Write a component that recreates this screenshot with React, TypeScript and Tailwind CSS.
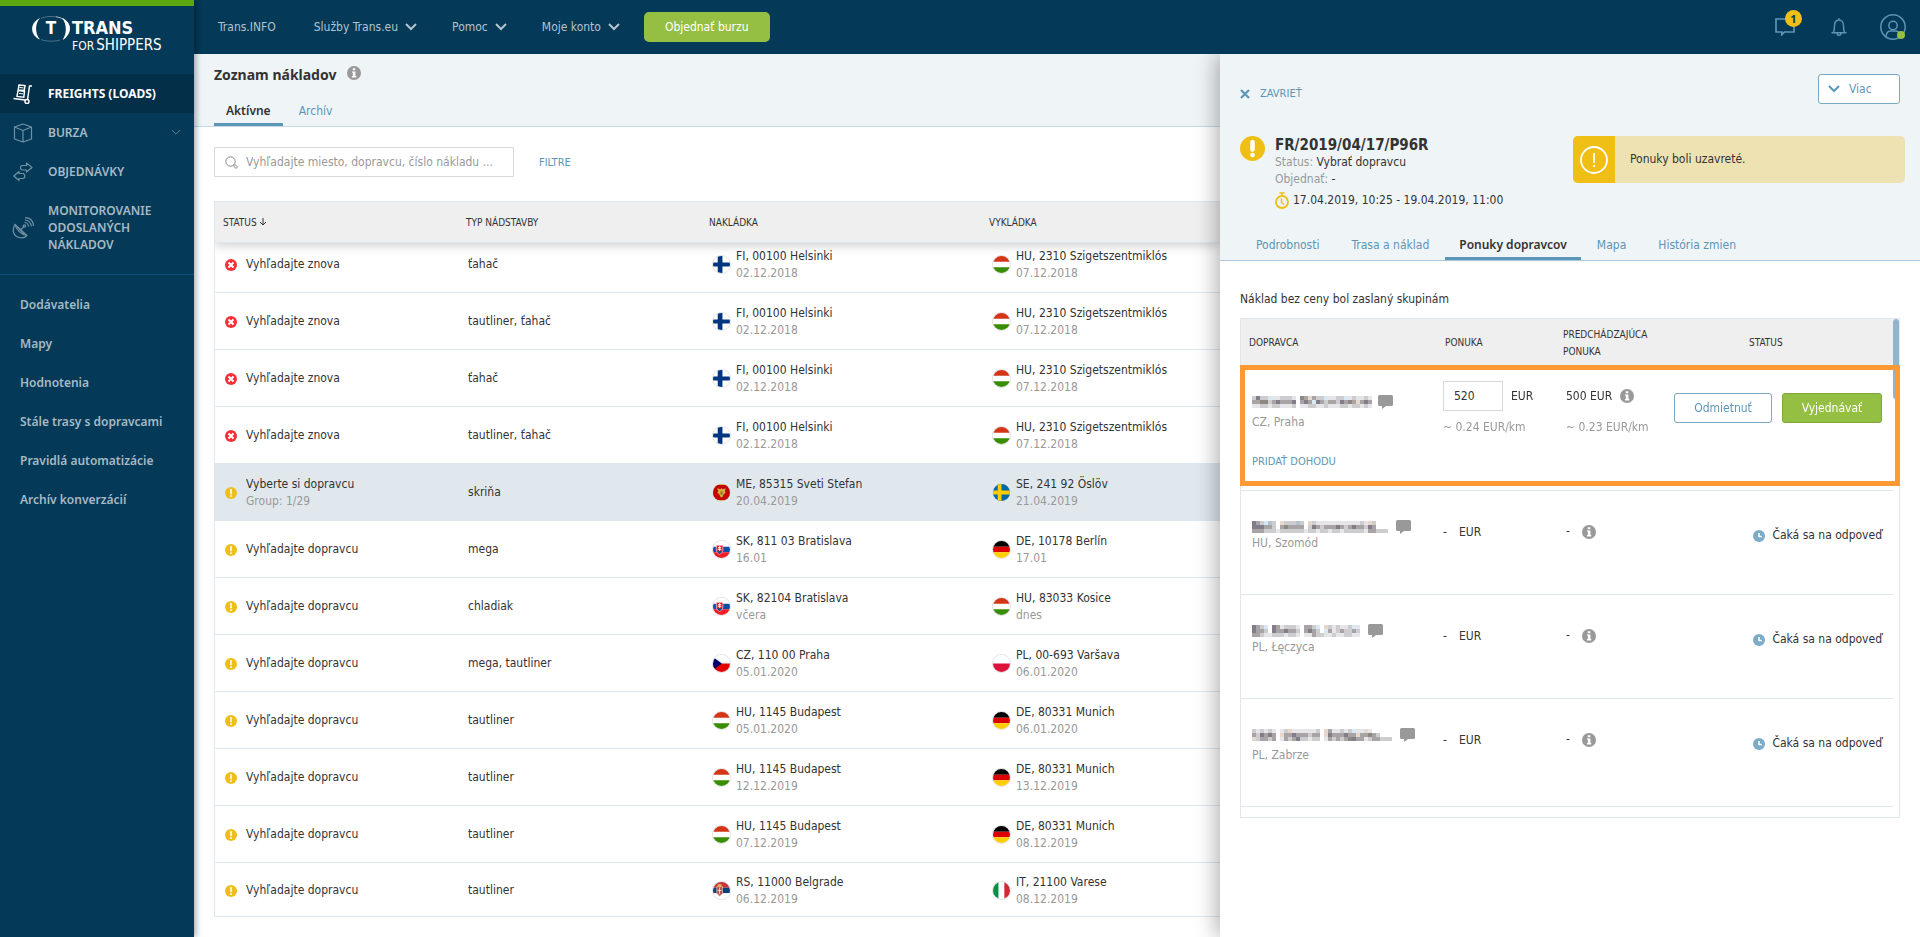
import React, { useState } from 'react';

type Country = 'FI' | 'HU' | 'ME' | 'SE' | 'SK' | 'DE' | 'CZ' | 'PL' | 'RS' | 'IT';

interface Place {
  country: Country;
  label: string;
  date: string;
}

interface Freight {
  failed?: boolean;
  selected?: boolean;
  status: string;
  group?: string;
  body: string;
  from: Place;
  to: Place;
}

const helsinki: Place = { country: 'FI', label: 'FI, 00100 Helsinki', date: '02.12.2018' };
const sziget: Place = { country: 'HU', label: 'HU, 2310 Szigetszentmiklós', date: '07.12.2018' };

const freights: Freight[] = [
  { failed: true, status: 'Vyhľadajte znova', body: 'ťahač', from: helsinki, to: sziget },
  { failed: true, status: 'Vyhľadajte znova', body: 'tautliner, ťahač', from: helsinki, to: sziget },
  { failed: true, status: 'Vyhľadajte znova', body: 'ťahač', from: helsinki, to: sziget },
  { failed: true, status: 'Vyhľadajte znova', body: 'tautliner, ťahač', from: helsinki, to: sziget },
  {
    selected: true,
    status: 'Vyberte si dopravcu',
    group: 'Group: 1/29',
    body: 'skriňa',
    from: { country: 'ME', label: 'ME, 85315 Sveti Stefan', date: '20.04.2019' },
    to: { country: 'SE', label: 'SE, 241 92 Öslöv', date: '21.04.2019' },
  },
  {
    status: 'Vyhľadajte dopravcu',
    body: 'mega',
    from: { country: 'SK', label: 'SK, 811 03 Bratislava', date: '16.01' },
    to: { country: 'DE', label: 'DE, 10178 Berlín', date: '17.01' },
  },
  {
    status: 'Vyhľadajte dopravcu',
    body: 'chladiak',
    from: { country: 'SK', label: 'SK, 82104 Bratislava', date: 'včera' },
    to: { country: 'HU', label: 'HU, 83033 Kosice', date: 'dnes' },
  },
  {
    status: 'Vyhľadajte dopravcu',
    body: 'mega, tautliner',
    from: { country: 'CZ', label: 'CZ, 110 00 Praha', date: '05.01.2020' },
    to: { country: 'PL', label: 'PL, 00-693 Varšava', date: '06.01.2020' },
  },
  {
    status: 'Vyhľadajte dopravcu',
    body: 'tautliner',
    from: { country: 'HU', label: 'HU, 1145 Budapest', date: '05.01.2020' },
    to: { country: 'DE', label: 'DE, 80331 Munich', date: '06.01.2020' },
  },
  {
    status: 'Vyhľadajte dopravcu',
    body: 'tautliner',
    from: { country: 'HU', label: 'HU, 1145 Budapest', date: '12.12.2019' },
    to: { country: 'DE', label: 'DE, 80331 Munich', date: '13.12.2019' },
  },
  {
    status: 'Vyhľadajte dopravcu',
    body: 'tautliner',
    from: { country: 'HU', label: 'HU, 1145 Budapest', date: '07.12.2019' },
    to: { country: 'DE', label: 'DE, 80331 Munich', date: '08.12.2019' },
  },
  {
    status: 'Vyhľadajte dopravcu',
    body: 'tautliner',
    from: { country: 'RS', label: 'RS, 11000 Belgrade', date: '06.12.2019' },
    to: { country: 'IT', label: 'IT, 21100 Varese', date: '08.12.2019' },
  },
];

// Anonymised carrier names: one letter per 4px block, see blockColors
const maskedNames = {
  praha: ['bdbbeaabbba.gcfcbbeaabbeabaaba', 'ccggbcdcccd.cdcedcbccbdcgcfcdc', 'aabbabbaaab.aabbaabaaabbabbaba'],
  szomod: ['dcbehb.fbbbhb.fbaaaaaaaaaaabafb...', 'dddccb.cgcccc.bdcbcccdcbcdccbdc...', 'cccbbbabbbbbbabbabbabbabbbbbaccbbb'],
  leczyca: ['dcbe.dcabbba.ccbe.fbabaabea', 'dccb.dccdccb.cdcb.ecabcbbcb', 'ccbaabbbabba.aacbbaabaabbaa'],
  zabrze: ['bababa.abfaaaaaab.fcaababeaafa.....', 'cbdcdc.fccdcccbcc.fdcccdccfccgcb...', 'fbccbc.acbcdbbabb.acbcbcgdccabccbbb'],
};

const blockColors: Record<string, string> = {
  a: '#e6e6e8',
  b: '#cdcccf',
  c: '#a8a3a4',
  d: '#827d88',
  e: '#d8e8f4',
  f: '#e8d8cb',
  g: '#8d8980',
  h: '#b3c3cd',
};

interface Offer {
  name: keyof typeof maskedNames;
  city: string;
  loose?: boolean;
}

const waitingOffers: Offer[] = [
  { name: 'szomod', city: 'HU, Szomód' },
  { name: 'leczyca', city: 'PL, Łęczyca' },
  { name: 'zabrze', city: 'PL, Zabrze', loose: true },
];

const sideLinks = [
  'Dodávatelia',
  'Mapy',
  'Hodnotenia',
  'Stále trasy s dopravcami',
  'Pravidlá automatizácie',
  'Archív konverzácií',
];

const detailTabs = ['Podrobnosti', 'Trasa a náklad', 'Ponuky dopravcov', 'Mapa', 'História zmien'];

function Flag({ country }: { country: Country }) {
  const art: Record<Country, React.ReactNode> = {
    FI: (
      <>
        <path fill="#fff" d="M0 0h18v18H0z" />
        <path fill="#003580" d="M5 0h5v18H5zM0 7h18v4H0z" />
      </>
    ),
    SE: (
      <>
        <path fill="#006aa7" d="M0 0h18v18H0z" />
        <path fill="#fecc00" d="M5 0h4v18H5zM0 7h18v4H0z" />
      </>
    ),
    HU: (
      <>
        <path fill="#fff" d="M0 0h18v18H0z" />
        <path fill="#d43516" d="M0 0h18v6H0z" />
        <path fill="#388d00" d="M0 12h18v6H0z" />
      </>
    ),
    DE: (
      <>
        <path fill="#000" d="M0 0h18v6H0z" />
        <path fill="#d00" d="M0 6h18v6H0z" />
        <path fill="#ffce00" d="M0 12h18v6H0z" />
      </>
    ),
    CZ: (
      <>
        <path fill="#fff" d="M0 0h18v9H0z" />
        <path fill="#e30000" d="M0 9h18v9H0z" />
        <path fill="#00006f" d="M0 2l9.500 7L0 16z" />
      </>
    ),
    PL: (
      <>
        <path fill="#fff" d="M0 0h18v9H0z" />
        <path fill="#dc143c" d="M0 9h18v9H0z" />
      </>
    ),
    IT: (
      <>
        <path fill="#009246" d="M0 0h6v18H0z" />
        <path fill="#fff" d="M6 0h6v18H6z" />
        <path fill="#ce2b37" d="M12 0h6v18h-6z" />
      </>
    ),
    SK: (
      <>
        <path fill="#fff" d="M0 0h18v6H0z" />
        <path fill="#0b4ea2" d="M0 6h18v6H0z" />
        <path fill="#ee1c25" d="M0 12h18v6H0z" />
        <path fill="#ee1c25" stroke="#fff" strokeWidth=".6" d="M3.500 4.500h7v5c0 2.500-2 4-3.500 4.700-1.500-.7-3.500-2.200-3.500-4.700z" />
        <path fill="#0b4ea2" d="M4.500 11.300q2.500-1.500 5 0-.8 1.500-2.500 2.200-1.700-.7-2.500-2.200z" />
        <path fill="none" stroke="#fff" d="M7 5.500v5M5.500 7h3M5 8.800h4" />
      </>
    ),
    ME: (
      <>
        <path fill="#d3ae3b" d="M0 0h18v18H0z" />
        <path fill="#c40308" d="M0 1h18v16H0z" />
        <path fill="#d3ae3b" d="M9 4l1 1.500 3.500-1-1 3.500 1 1-2.500 2.500L10 14H8l-1-2.500L4.500 9l1-1-1-3.500 3.500 1z" />
        <path fill="#8f6b24" d="M8 8h2v3H8z" />
      </>
    ),
    RS: (
      <>
        <path fill="#c6363c" d="M0 0h18v6H0z" />
        <path fill="#0c4076" d="M0 6h18v6H0z" />
        <path fill="#fff" d="M0 12h18v6H0z" />
        <path fill="#b54a44" stroke="#dcc8b4" strokeWidth=".8" d="M4 5h6v7l-3 3-3-3z" />
        <path fill="#e3b85c" d="M5 2.500h4V5H5z" />
        <path stroke="#fff" strokeWidth=".8" d="M7 6v7M5 9h4" />
      </>
    ),
  };
  return (
    <span className="block size-[19px] shrink-0 overflow-hidden rounded-full border border-[#e0e0e0]">
      <svg viewBox="0 0 18 18" className="block size-full">
        {art[country]}
      </svg>
    </span>
  );
}

function Info({ className }: { className: string }) {
  return (
    <svg viewBox="0 0 14 14" className={className} aria-label="Info">
      <circle cx="7" cy="7" r="7" fill="#999" />
      <path fill="#fff" d="M5.800 2.300h2.500v2H5.800zM5 5.400h3.400v4.600H9.300v1.400H4.900V10h1V6.800H5z" />
    </svg>
  );
}

function Chevron({ className }: { className: string }) {
  return (
    <svg viewBox="0 0 12 8" className={className} fill="none" stroke="currentColor">
      <path d="M1 1l5 5 5-5" />
    </svg>
  );
}

function StatusIcon({ failed }: { failed?: boolean }) {
  return failed ? (
    <svg viewBox="0 0 12 12" className="size-3 shrink-0">
      <circle cx="6" cy="6" r="6" fill="#f92f36" />
      <path d="M3.500 3.500l5 5M8.500 3.500l-5 5" stroke="#fff" strokeWidth="2" />
    </svg>
  ) : (
    <svg viewBox="0 0 12 12" className="size-3 shrink-0">
      <circle cx="6" cy="6" r="6" fill="#efbf16" />
      <path d="M6 2v5.200M6 8.200V10" stroke="#fff" strokeWidth="1.600" />
    </svg>
  );
}

function MaskedName({ name }: { name: keyof typeof maskedNames }) {
  const rows = maskedNames[name];
  const width = Math.max(...rows.map((row) => row.length)) * 4;
  return (
    <svg width={width} height="12" shapeRendering="crispEdges" className="block shrink-0" aria-hidden="true">
      {rows.map((row, y) =>
        row.split('').map((block, x) =>
          block === '.' ? null : (
            <rect key={`${x}-${y}`} x={x * 4} y={y * 4} width="4" height="4" fill={blockColors[block]} />
          )
        )
      )}
    </svg>
  );
}

function ChatButton() {
  return (
    <button aria-label="Chat" className="shrink-0">
      <svg viewBox="0 0 15 14" className="block h-[14px] w-[15px]" fill="#999">
        <path d="M1.500 0h12Q15 0 15 1.500v8q0 1.500-1.500 1.500H8l-4 3v-3H1.500Q0 11 0 9.500v-8Q0 0 1.500 0z" />
      </svg>
    </button>
  );
}

function Logo() {
  return (
    <a
      href="#"
      className="flex items-start gap-[2px] pt-[10px] pl-8 font-['DejaVu_Sans_Condensed',sans-serif] text-white"
      aria-label="Trans for Shippers"
    >
      <svg viewBox="0 0 38 26" className="h-[26px] w-[38px]">
        <path fill="#fff" d="M8 2C-2.500 7-2.500 19 8 23.500 2.800 18 2.800 7.500 8 2z" />
        <path fill="#fff" d="M30 2c10 4 11 16 .5 22 4.500-6 4.500-16-.5-22z" />
        <path fill="none" stroke="#fff" strokeWidth=".7" d="M24 .8c8 1 13 6 13.500 11" />
        <path fill="none" stroke="#7f9bab" strokeWidth=".6" d="M9 2.500C13 .3 20 .1 24 .8M9 23.500c4 2 14 2.300 19 .5" />
        <text x="19" y="18" textAnchor="middle" fill="#fff" fontSize="17" fontWeight="700">
          T
        </text>
      </svg>
      <span className="flex flex-col pt-[2px]">
        <b className="text-[18px] leading-[20px]">TRANS</b>
        <span className="flex items-baseline gap-[2px] text-[15px] leading-[14px] font-normal">
          <span className="text-[12px]">FOR</span>
          <span>SHIPPERS</span>
        </span>
      </span>
    </a>
  );
}

function Sidebar() {
  return (
    <aside className="z-20 w-[194px] shrink-0 border-t-[6px] border-[#5ba80f] bg-[#043957] font-['Noto_Sans',sans-serif] text-[12px] leading-[17px] font-semibold text-[#a6b9c5] shadow-[2px_0_6px_rgba(0,0,0,0.35)]">
      <div className="h-[68px]">
        <Logo />
      </div>
      <nav>
        <a href="#" className="flex h-[39px] items-center gap-[15px] bg-[#032f49] pl-[13px] font-bold text-white">
          <svg viewBox="0 0 20 20" className="size-5" fill="none" stroke="currentColor" strokeWidth="1.500">
            <path d="M6 1l6 .6-.8 5-6-.6zM5 6.500l6.500.7-.7 6-6.800-.8z" />
            <path d="M19 2h-2.500L14.500 16M.5 14.500l11.500 1.500" />
            <path d="M6.500 3.500l4 .4M6 9.500l4 .4" strokeWidth="1" />
            <circle cx="14" cy="17.500" r="2" />
          </svg>
          FREIGHTS (LOADS)
        </a>
        <a href="#" className="flex h-[39px] items-center gap-[15px] pr-[13px] pl-[13px]">
          <svg viewBox="0 0 20 20" className="size-5 text-[#7290a3]" fill="none" stroke="currentColor" strokeWidth="1.200" strokeLinejoin="round">
            <path d="M10 1l8.500 3v12L10 19l-8.500-3V4zM1.500 4L10 7.500 18.500 4M10 7.500V19" />
          </svg>
          BURZA
          <Chevron className="ml-auto h-[7px] w-[10px] text-[#7290a3]" />
        </a>
        <a href="#" className="flex h-[39px] items-center gap-[15px] pl-[13px]">
          <svg viewBox="0 0 20 20" className="size-5 text-[#7290a3]" fill="none" stroke="currentColor" strokeWidth="1.200" strokeLinejoin="round">
            <path d="M8.500 3.500h5V1l5.500 4.500-5.500 4.500V8H9.500q-2 0-2-2.200 0-1.500 1-2.300z" />
            <path d="M10.500 11.500H6V9.500L.8 14 6 18.500v-2h4q1.800 0 1.800-2.400 0-1.600-1.300-2.600z" />
          </svg>
          OBJEDNÁVKY
        </a>
        <a href="#" className="flex items-center gap-[14px] py-[11px] pr-6 pl-3">
          <svg viewBox="0 0 22 22" className="size-[22px] shrink-0 text-[#7290a3]" fill="none" stroke="currentColor" strokeWidth="1.200">
            <path d="M3 7.500C-.5 13 1.500 19 7 20.500c3 .8 6 .2 8-2zM5 10l7.500 7" />
            <path d="M3 7.500c1 5 6 10 12 11M8 13.500l4-4" />
            <circle cx="12.500" cy="9" r="1.200" />
            <path d="M12.500 5.500q3.500 0 4 4M12.800 3q5.800.3 6.500 6.500M13 .7q8 .3 8.500 8.300" />
          </svg>
          <span>MONITOROVANIE ODOSLANÝCH NÁKLADOV</span>
        </a>
      </nav>
      <nav className="mt-[10px] border-t border-[#0d4c74] pt-[10px]">
        {sideLinks.map((link) => (
          <a key={link} href="#" className="flex h-[39px] items-center pl-5">
            {link}
          </a>
        ))}
      </nav>
    </aside>
  );
}

function TopBar() {
  return (
    <header className="flex h-[54px] items-center bg-[#043957] pr-[14px] pl-6 text-[12px] text-[#b3c4cf]">
      <a href="#">Trans.INFO</a>
      <button className="ml-[38px] flex items-center gap-[7px]">
        Služby Trans.eu
        <Chevron className="h-2 w-3 stroke-2" />
      </button>
      <button className="ml-[35px] flex items-center gap-[7px]">
        Pomoc
        <Chevron className="h-2 w-3 stroke-2" />
      </button>
      <button className="ml-[35px] flex items-center gap-[7px]">
        Moje konto
        <Chevron className="h-2 w-3 stroke-2" />
      </button>
      <button className="ml-6 h-[30px] rounded-[5px] bg-[#95bf42] px-[21px] text-white">Objednať burzu</button>
      <div className="ml-auto flex items-center text-[#5f94b5]">
        <button aria-label="Správy" className="relative mr-7 w-7">
          <svg viewBox="0 0 20 18" className="block h-[18px] w-5" fill="none" stroke="currentColor" strokeWidth="1.700">
            <path d="M1 1h18v13H9.500L6.800 16.700V14H1z" />
          </svg>
          <span className="absolute -top-[8px] left-[10px] size-[17px] rounded-full bg-[#efbf16] text-center font-['Noto_Sans',sans-serif] text-[11px] leading-[17px] font-bold text-[#043957]">
            1
          </span>
        </button>
        <button aria-label="Upozornenia" className="mr-[33px]">
          <svg viewBox="0 0 16 18" className="block h-[18px] w-4" fill="none" stroke="currentColor" strokeWidth="1.400">
            <path d="M.5 14.700h15M2.500 14.500Q3.500 12 3.500 8C3.500 4 5.500 2 8 2s4.500 2 4.500 6q0 4 1 6.500M8 .3V2M6 15q0 2.200 2 2.200T10 15" />
          </svg>
        </button>
        <button aria-label="Profil" className="relative">
          <svg viewBox="0 0 26 26" className="block size-[26px]" fill="none" stroke="currentColor" strokeWidth="1.500">
            <circle cx="13" cy="13" r="12.200" />
            <circle cx="13" cy="11.500" r="4.200" />
            <path d="M6 22.500q.5-5.500 4.500-5.500h5q3 0 4 2.500" />
          </svg>
          <span className="absolute right-[1px] bottom-[1px] size-2 rounded-full bg-[#95bf42]" />
        </button>
      </div>
    </header>
  );
}

function PlaceCell({ place }: { place: Place }) {
  return (
    <div className="flex items-center gap-[5px]">
      <Flag country={place.country} />
      <div>
        <div>{place.label}</div>
        <div className="text-[#999]">{place.date}</div>
      </div>
    </div>
  );
}

function FreightList() {
  const [query, setQuery] = useState('');

  return (
    <main className="min-w-0 flex-1 overflow-hidden pb-5">
      <div className="border-b border-[#c5dae5] bg-[#eff4f7] pl-5">
        <h1 className="flex items-center gap-[11px] pt-[10px] font-['Noto_Sans',sans-serif] text-[14px] leading-[22px] font-bold">
          Zoznam nákladov
          <Info className="mb-1 size-[14px]" />
        </h1>
        <div className="mt-[10px] flex">
          <button className="h-[30px] border-b-[3px] border-[#5c96b6] px-3 pt-[2px] font-['Noto_Sans',sans-serif] font-semibold">
            Aktívne
          </button>
          <button className="h-[30px] border-b-[3px] border-transparent px-4 pt-[3px] text-[#5c96b6]">Archív</button>
        </div>
      </div>
      <div className="mt-5 flex items-center gap-[25px] pl-5">
        <label className="flex h-[30px] w-[300px] items-center gap-2 border border-[#d9d9d9] pl-[10px]">
          <svg viewBox="0 0 13 13" className="size-[13px] shrink-0" fill="none" stroke="#888">
            <circle cx="5.500" cy="5.500" r="4.700" />
            <path d="M8.500 10l1.500-1.500 2.500 2.500-1.500 1.500z" />
          </svg>
          <input
            value={query}
            onChange={(e) => setQuery(e.target.value)}
            aria-label="Vyhľadávanie"
            placeholder="Vyhľadajte miesto, dopravcu, číslo nákladu ..."
            className="w-full outline-none placeholder:text-[#999]"
          />
        </label>
        <button className="text-[11px] text-[#5c96b6]">FILTRE</button>
      </div>
      <div className="mt-6 ml-5 overflow-hidden border-y border-l border-[#e0e7ee]">
        <table className="w-full table-fixed border-separate border-spacing-0 text-left">
          <thead className="relative z-10 text-[10px] shadow-[0_3px_10px_rgba(0,0,0,0.18)]">
            <tr className="h-[41px] bg-[#efefef]">
              <th className="w-[243px] border-b border-[#dde6ee] pl-2 font-normal">
                <span className="flex items-center gap-[2px]">
                  STATUS
                  <svg viewBox="0 0 8 8" className="size-2" fill="none" stroke="currentColor">
                    <path d="M4 0v7M1 4l3 3 3-3" />
                  </svg>
                </span>
              </th>
              <th className="w-[243px] border-b border-[#dde6ee] pl-2 font-normal">TYP NÁDSTAVBY</th>
              <th className="w-[280px] border-b border-[#dde6ee] pl-2 font-normal">NAKLÁDKA</th>
              <th className="border-b border-[#dde6ee] pl-2 font-normal">VYKLÁDKA</th>
            </tr>
          </thead>
          <tbody>
            {freights.map((freight, i) => (
              <tr
                key={i}
                className={
                  (freight.selected ? 'bg-[#e0e8ee] ' : '') +
                  (i === 0
                    ? 'h-[50px] [&>td]:border-b [&>td]:pb-[6px]'
                    : i === freights.length - 1
                      ? 'h-[53px] [&>td]:pt-[2px]'
                      : 'h-[57px] [&>td]:border-b [&>td]:pt-px')
                }
              >
                <td className="border-[#e0e7ee] pl-[10px]">
                  <div className="flex items-center gap-[9px]">
                    <StatusIcon failed={freight.failed} />
                    <div>
                      <div>{freight.status}</div>
                      {freight.group && <div className="text-[#999]">{freight.group}</div>}
                    </div>
                  </div>
                </td>
                <td className="border-[#e0e7ee] pl-[10px]">{freight.body}</td>
                <td className="border-[#e0e7ee] pl-[11px]">
                  <PlaceCell place={freight.from} />
                </td>
                <td className="border-[#e0e7ee] pl-[11px]">
                  <PlaceCell place={freight.to} />
                </td>
              </tr>
            ))}
          </tbody>
        </table>
      </div>
    </main>
  );
}

function OffersTable() {
  const [price, setPrice] = useState('520');

  return (
    <div className="relative mt-[10px] border border-[#e0e7ee] bg-white pr-[6px] pb-[10px]">
      <table className="w-full table-fixed border-separate border-spacing-0 text-left">
        <thead className="text-[10px] leading-[17px]">
          <tr className="h-[47px] bg-[#efefef] [&>th]:font-normal">
            <th className="w-[194px] pl-2">DOPRAVCA</th>
            <th className="w-[118px] pl-[10px]">PONUKA</th>
            <th className="w-[112px] pl-[10px]">PREDCHÁDZAJÚCA PONUKA</th>
            <th className="pl-[84px]">STATUS</th>
          </tr>
        </thead>
        <tbody className="align-top">
          <tr className="h-[125px] [&>td]:border-b [&>td]:border-[#e0e7ee]">
            <td className="pt-[27px] pl-[11px]">
              <div className="flex h-[17px] items-center gap-[6px]">
                <MaskedName name="praha" />
                <ChatButton />
              </div>
              <div className="mt-1 text-[#999]">CZ, Praha</div>
              <button className="mt-[22px] text-[11px] text-[#5c96b6]">PRIDAŤ DOHODU</button>
            </td>
            <td className="pt-[15px] pl-2">
              <label className="flex items-center gap-2">
                <input
                  value={price}
                  onChange={(e) => setPrice(e.target.value)}
                  autoFocus
                  aria-label="Ponuka"
                  className="h-[30px] w-[60px] border border-[#d9d9d9] pl-[10px] outline-none"
                />
                EUR
              </label>
              <div className="mt-2 text-[#999]">~ 0.24 EUR/km</div>
            </td>
            <td className="pt-[15px] pl-[13px]">
              <div className="flex h-[30px] items-center gap-2">
                500 EUR <Info className="size-[14px]" />
              </div>
              <div className="mt-2 text-[#999]">~ 0.23 EUR/km</div>
            </td>
            <td className="pt-[27px] pr-[11px]">
              <div className="flex justify-end gap-[10px]">
                <button className="h-[30px] w-[98px] rounded-[3px] border border-[#7aa9c4] text-[#5c96b6]">Odmietnuť</button>
                <button className="h-[30px] w-[100px] rounded-[3px] border border-[#7fa637] bg-[#95bf42] text-white">
                  Vyjednávať
                </button>
              </div>
            </td>
          </tr>
          {waitingOffers.map((offer) => (
            <tr
              key={offer.name}
              className={
                '[&>td]:border-b [&>td]:border-[#e0e7ee] ' +
                (offer.loose ? 'h-[108px] [&>td]:pt-[27px]' : 'h-[104px] [&>td]:pt-[27px]')
              }
            >
              <td className="pl-[11px]">
                <div className="flex h-[17px] items-center gap-2">
                  <MaskedName name={offer.name} />
                  <ChatButton />
                </div>
                <div className={offer.loose ? 'mt-1 text-[#999]' : 'text-[#999]'}>{offer.city}</div>
              </td>
              <td className="pl-2">
                <div className="flex gap-[12px] pt-[6px]">
                  <span>-</span>EUR
                </div>
              </td>
              <td className="pl-[13px]">
                <div className="flex items-center gap-[12px] pt-[5px]">
                  -<Info className="size-[14px]" />
                </div>
              </td>
              <td className="pr-[11px]">
                <div className="flex items-center justify-end gap-[7px] pt-[9px]">
                  <svg viewBox="0 0 12 12" className="size-3" fill="none" stroke="#fff" strokeWidth="1.500">
                    <circle cx="6" cy="6" r="6" fill="#7dabc5" stroke="none" />
                    <path d="M6 3v3.500h2.800" />
                  </svg>
                  Čaká sa na odpoveď
                </div>
              </td>
            </tr>
          ))}
        </tbody>
      </table>
      <span className="absolute top-0 right-0 h-20 w-[6px] rounded-full bg-[#93b4cd]" />
      <span className="pointer-events-none absolute -inset-x-px top-[46px] h-[121px] border-[5px] border-[#ff9933]" />
    </div>
  );
}

function FreightDetail() {
  const [tab, setTab] = useState('Ponuky dopravcov');

  return (
    <section className="z-10 w-[700px] shrink-0 bg-white shadow-[-4px_0_20px_rgba(0,0,0,0.3)]">
      <div className="border-b border-[#a9c9da] bg-[#eff4f7] pt-5 pl-5">
        <div className="flex items-start justify-between pr-5">
          <button className="mt-[11px] flex items-center gap-[10px] text-[11px] text-[#5c96b6]">
            <svg viewBox="0 0 10 10" className="size-[10px]" fill="none" stroke="currentColor" strokeWidth="2.200">
              <path d="M1 1l8 8M9 1L1 9" />
            </svg>
            ZAVRIEŤ
          </button>
          <button className="flex h-[30px] w-[82px] items-center gap-[9px] rounded-[3px] border border-[#7aa9c4] bg-white pl-[9px] text-[#5c96b6]">
            <Chevron className="h-2 w-3 stroke-2" />
            Viac
          </button>
        </div>
        <div className="mt-8 flex items-start justify-between pr-[15px]">
          <div className="flex gap-[10px]">
            <svg viewBox="0 0 25 25" className="size-[25px]">
              <circle cx="12.500" cy="12.500" r="12.500" fill="#efbf16" />
              <path d="M12.500 6v7.500" stroke="#fff" strokeWidth="4.500" strokeLinecap="round" />
              <circle cx="12.500" cy="19" r="2.300" fill="#fff" />
            </svg>
            <div>
              <h2 className="font-['DejaVu_Sans_Condensed',sans-serif] text-[15px] leading-[18px] font-bold">
                FR/2019/04/17/P96R
              </h2>
              <div>
                <span className="text-[#999]">Status:</span> Vybrať dopravcu
              </div>
              <div>
                <span className="text-[#999]">Objednať:</span> -
              </div>
              <div className="mt-[4px] flex items-center gap-1">
                <svg viewBox="0 0 14 17" className="h-[17px] w-[14px]" fill="none" stroke="#efbf16" strokeWidth="1.800">
                  <circle cx="7" cy="10" r="6" />
                  <path d="M7 4V1M4.500 1h5M6.500 6.500V10.500L9 12.500" strokeWidth="1.500" />
                </svg>
                17.04.2019, 10:25 - 19.04.2019, 11:00
              </div>
            </div>
          </div>
          <div role="alert" className="flex h-[47px] w-[332px] items-center overflow-hidden rounded-[5px] bg-[#efe2b2]">
            <span className="flex h-full w-[42px] items-center justify-center bg-[#efbf16]">
              <svg viewBox="0 0 28 28" className="size-7" fill="none" stroke="#fff" strokeWidth="1.800">
                <circle cx="14" cy="14" r="13" />
                <path d="M14 7v10M14 19v2" />
              </svg>
            </span>
            <span className="pl-[15px]">Ponuky boli uzavreté.</span>
          </div>
        </div>
        <div className="mt-[21px] flex">
          {detailTabs.map((name) => (
            <button
              key={name}
              onClick={() => setTab(name)}
              className={
                name === tab
                  ? "h-[30px] border-b-[3px] border-[#5c96b6] px-[14px] pt-[2px] font-['Noto_Sans',sans-serif] font-semibold"
                  : 'h-[30px] border-b-[3px] border-transparent px-4 pt-[3px] text-[#5c96b6]'
              }
            >
              {name}
            </button>
          ))}
        </div>
      </div>
      <div className="pt-[30px] pr-5 pl-5">
        <p>Náklad bez ceny bol zaslaný skupinám</p>
        <OffersTable />
      </div>
    </section>
  );
}

export default function App() {
  return (
    <div className="flex min-h-screen bg-white font-['DejaVu_Sans_Condensed','Noto_Sans',sans-serif] text-[12px] leading-[17px] text-[#333]">
      <Sidebar />
      <div className="flex min-w-0 flex-1 flex-col">
        <TopBar />
        <div className="flex flex-1 overflow-hidden">
          <FreightList />
          <FreightDetail />
        </div>
      </div>
    </div>
  );
}
